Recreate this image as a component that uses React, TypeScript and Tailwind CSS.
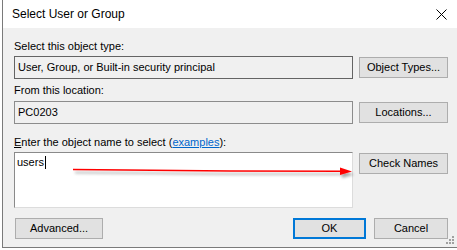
import React from "react";

const font = { fontFamily: '"Liberation Sans", Arial, sans-serif' };

function Btn({ children, className = "" }: { children: React.ReactNode; className?: string }) {
  return (
    <div
      className={
        "h-[21px] flex items-center justify-center bg-[#e1e1e1] border border-[#adadad] text-[11px] text-black " +
        className
      }
    >
      {children}
    </div>
  );
}

export default function App() {
  return (
    <div className="relative w-[457px] h-[250px] bg-white overflow-hidden" style={font}>
      <div className="ml-[2px] h-[248px] border-l border-b border-[#7a7a7a] flex flex-col">
        <div className="h-[28px] bg-white flex items-center justify-between pl-[9px] pr-[10px]">
          <span className="text-[12px] text-black">Select User or Group</span>
          <svg width="11" height="11" viewBox="0 0 11 11">
            <path d="M0.5 0.5 L10.5 10.5 M10.5 0.5 L0.5 10.5" stroke="#000" strokeWidth="1" />
          </svg>
        </div>
        <div className="flex-1 bg-[#f0f0f0] pl-[11px] pr-[9px] flex flex-col text-[11px] text-black">
          <div className="mt-[11px] h-[14px] leading-[14px]">Select this object type:</div>
          <div className="mt-[3px] flex items-center gap-[6px]">
            <div className="w-[339px] h-[23px] border border-[#646464] bg-[#f0f0f0] flex items-center pl-[3px]">
              User, Group, or Built-in security principal
            </div>
            <Btn className="w-[89px]">Object Types...</Btn>
          </div>
          <div className="mt-[4px] h-[14px] leading-[14px]">From this location:</div>
          <div className="mt-[4px] flex items-center gap-[6px]">
            <div className="w-[339px] h-[23px] border border-[#8c8c8c] bg-[#f0f0f0] flex items-center pl-[3px]">
              PC0203
            </div>
            <Btn className="w-[89px]">Locations...</Btn>
          </div>
          <div className="mt-[11px] h-[14px] leading-[14px]">
            <span className="underline">E</span>nter the object name to select (
            <span className="text-[#0066cc] underline">examples</span>):
          </div>
          <div className="mt-[3px] flex items-start gap-[6px]">
            <div className="w-[339px] h-[56px] border-t border-l border-[#8a8a8a] border-r border-b border-r-[#dcdcdc] border-b-[#dcdcdc] bg-white pl-[2px] pt-[2px]">
              <div className="flex items-center h-[14px]">
                <span>users</span>
                <span className="inline-block w-px h-[13px] bg-black ml-px" />
              </div>
            </div>
            <Btn className="w-[89px] mt-px">Check Names</Btn>
          </div>
          <div className="mt-[10px] flex items-center">
            <Btn className="w-[88px] ml-px">Advanced...</Btn>
            <div className="flex-1" />
            <div className="w-[73px] h-[21px] flex items-center justify-center bg-[#e1e1e1] border-2 border-[#0078d7] text-[11px]">
              OK
            </div>
            <Btn className="w-[74px] ml-[8px]">Cancel</Btn>
          </div>
        </div>
      </div>
      <svg className="absolute left-0 top-0 pointer-events-none" width="457" height="250">
        <defs>
          <filter id="sh" x="-10%" y="-200%" width="120%" height="500%">
            <feGaussianBlur in="SourceAlpha" stdDeviation="1.5" />
            <feOffset dx="2" dy="3" result="b" />
            <feComponentTransfer>
              <feFuncA type="linear" slope="0.35" />
            </feComponentTransfer>
            <feMerge>
              <feMergeNode />
              <feMergeNode in="SourceGraphic" />
            </feMerge>
          </filter>
        </defs>
        <g filter="url(#sh)">
          <path d="M73 169.5 L230 171 L342 171.2" stroke="#ff0000" strokeWidth="1.6" fill="none" />
          <polygon points="340,167.5 352,171.5 340,175" fill="#ff0000" />
        </g>
        <g fill="#a0a0a0">
          <rect x="452" y="236" width="2" height="2" />
          <rect x="449" y="239" width="2" height="2" />
          <rect x="452" y="239" width="2" height="2" />
          <rect x="446" y="242" width="2" height="2" />
          <rect x="449" y="242" width="2" height="2" />
          <rect x="452" y="242" width="2" height="2" />
        </g>
      </svg>
    </div>
  );
}
